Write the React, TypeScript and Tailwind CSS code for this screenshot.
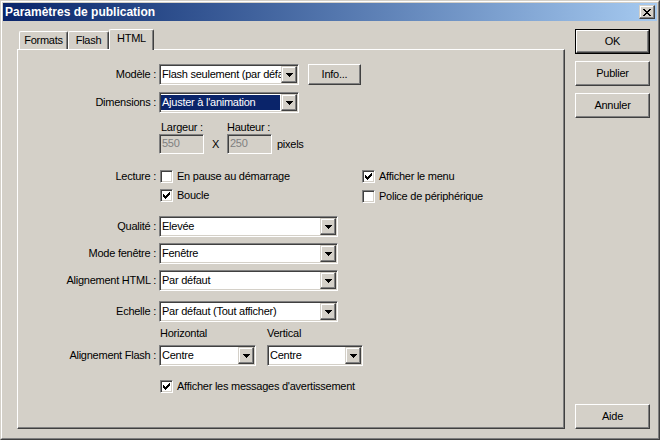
import { ReactNode } from 'react';

const sunken =
  'border border-t-[#808080] border-l-[#808080] border-r-white border-b-white shadow-[inset_1px_1px_0_#404040,inset_-1px_-1px_0_#d4d0c8]';
const raised =
  'border border-t-white border-l-white border-r-[#404040] border-b-[#404040] shadow-[inset_-1px_-1px_0_#808080,inset_1px_1px_0_#d4d0c8]';
const raisedSmall =
  'border border-t-[#d4d0c8] border-l-[#d4d0c8] border-r-[#404040] border-b-[#404040] shadow-[inset_-1px_-1px_0_#808080,inset_1px_1px_0_#ffffff]';

function Arrow() {
  return (
    <svg width="7" height="4" viewBox="0 0 7 4" shapeRendering="crispEdges">
      <path d="M0 0h7v1h-7z M1 1h5v1h-5z M2 2h3v1h-3z M3 3h1v1h-1z" fill="#000" />
    </svg>
  );
}

function Check() {
  return (
    <svg width="7" height="7" viewBox="0 0 7 7" shapeRendering="crispEdges">
      <path
        d="M6 0h1v1h-1z M5 1h2v1h-2z M0 2h1v1h-1z M4 2h3v1h-3z M0 3h2v1h-2z M3 3h3v1h-3z M0 4h5v1h-5z M1 5h3v1h-3z M2 6h1v1h-1z"
        fill="#000"
      />
    </svg>
  );
}

function Combo({ value, width, selected }: { value: string; width: string; selected?: boolean }) {
  return (
    <div className={`${sunken} ${width} h-[21px] bg-white p-px flex`}>
      <div className="flex-1 min-w-0 overflow-hidden whitespace-nowrap leading-[17px] py-px pr-px">
        <span className={selected ? 'block h-[15px] leading-[15px] bg-[#0a246a] text-white pl-px' : 'block leading-[15px] pl-px'}>
          {value}
        </span>
      </div>
      <div className={`${raisedSmall} w-[16px] h-[17px] bg-[#d4d0c8] flex items-center justify-center`}>
        <Arrow />
      </div>
    </div>
  );
}

function Checkbox({ checked, label }: { checked?: boolean; label: string }) {
  return (
    <div className="flex items-center gap-[4px] h-[13px]">
      <div className={`${sunken} w-[13px] h-[13px] bg-white flex items-center justify-center`}>
        {checked && <Check />}
      </div>
      <span className="whitespace-nowrap leading-[13px]">{label}</span>
    </div>
  );
}

function Button({ children, className, isDefault }: { children: ReactNode; className: string; isDefault?: boolean }) {
  if (isDefault) {
    return (
      <div className={`border border-black ${className}`}>
        <div className={`${raised} h-full flex items-center justify-center`}>{children}</div>
      </div>
    );
  }
  return <div className={`${raised} ${className} flex items-center justify-center`}>{children}</div>;
}

function Row({ label, className, children }: { label?: string; className: string; children: ReactNode }) {
  return (
    <div className={`flex items-center gap-[3px] ${className}`}>
      <div className="w-[138px] text-right whitespace-nowrap">{label}</div>
      {children}
    </div>
  );
}

function Tab({ label, width, active }: { label: string; width: string; active?: boolean }) {
  return (
    <div
      className={`${width} ${
        active ? 'h-[21px] -mb-px relative z-10 pb-[3px]' : 'h-[18px]'
      } bg-[#d4d0c8] border-t border-l border-r border-t-white border-l-white border-r-[#404040] rounded-t-[2px] shadow-[inset_-1px_0_0_#808080] flex items-center justify-center`}
    >
      {label}
    </div>
  );
}

export default function App() {
  return (
    <div className="w-[660px] h-[440px] bg-[#d4d0c8] border border-t-[#d4d0c8] border-l-[#d4d0c8] border-r-[#404040] border-b-[#404040] font-['Liberation_Sans',Arial,sans-serif] text-[11px] leading-[13px] tracking-[-0.25px] text-black">
      <div className="h-full border border-t-white border-l-white border-r-[#808080] border-b-[#808080] p-px flex flex-col">
        {/* title bar */}
        <div className="h-[18px] bg-gradient-to-r from-[#0a246a] to-[#a6caf0] flex items-center justify-between pl-[2px] pr-[2px]">
          <span className="text-white font-bold text-[12px] tracking-normal">Paramètres de publication</span>
          <div className={`${raisedSmall} w-[16px] h-[14px] bg-[#d4d0c8] flex items-center justify-center`}>
            <svg width="8" height="7" viewBox="0 0 8 7" shapeRendering="crispEdges">
              <path
                d="M0 0h2v1h-2z M6 0h2v1h-2z M1 1h2v1h-2z M5 1h2v1h-2z M2 2h4v1h-4z M3 3h2v1h-2z M2 4h4v1h-4z M1 5h2v1h-2z M5 5h2v1h-2z M0 6h2v1h-2z M6 6h2v1h-2z"
                fill="#000"
              />
            </svg>
          </div>
        </div>

        <div className="flex pl-[14px] pt-[8px] gap-[10px]">
          {/* tabs + panel */}
          <div className="w-[548px] flex flex-col">
            <div className="h-[20px] flex items-end pl-[2px]">
              <Tab label="Formats" width="w-[49px]" />
              <Tab label="Flash" width="w-[41px]" />
              <Tab label="HTML" width="w-[45px]" active />
            </div>
            <div className="h-[380px] border-t border-l border-r border-b border-t-white border-l-white border-r-[#404040] border-b-[#404040] shadow-[inset_-1px_-1px_0_#808080] flex flex-col">
              <Row label="Modèle :" className="mt-[14px]">
                <Combo width="w-[140px]" value="Flash seulement (par défaut)" />
                <Button className="ml-[6px] w-[53px] h-[21px]">Info...</Button>
              </Row>
              <Row label="Dimensions :" className="mt-[7px]">
                <Combo width="w-[140px]" value="Ajuster à l'animation" selected />
              </Row>
              <Row className="mt-[8px]">
                <span className="w-[65px] pl-[2px]">Largeur :</span>
                <span>Hauteur :</span>
              </Row>
              <Row className="">
                <div className={`${sunken} w-[45px] h-[20px] bg-[#d4d0c8] text-[#808080] pl-[2px] leading-[16px]`}>550</div>
                <span className="w-[17px] text-center">X</span>
                <div className={`${sunken} w-[45px] h-[20px] bg-[#d4d0c8] text-[#808080] pl-[2px] leading-[16px]`}>250</div>
                <span className="ml-[2px]">pixels</span>
              </Row>

              <div className="flex gap-[3px] mt-[16px]">
                <div className="w-[138px] text-right">Lecture :</div>
                <div className="w-[200px] flex flex-col gap-[6px] pl-px">
                  <Checkbox label="En pause au démarrage" />
                  <Checkbox label="Boucle" checked />
                </div>
                <div className="flex flex-col gap-[7px]">
                  <Checkbox label="Afficher le menu" checked />
                  <Checkbox label="Police de périphérique" />
                </div>
              </div>

              <Row label="Qualité :" className="mt-[13px]">
                <Combo width="w-[179px]" value="Elevée" />
              </Row>
              <Row label="Mode fenêtre :" className="mt-[6px]">
                <Combo width="w-[179px]" value="Fenêtre" />
              </Row>
              <Row label="Alignement HTML :" className="mt-[6px]">
                <Combo width="w-[179px]" value="Par défaut" />
              </Row>
              <Row label="Echelle :" className="mt-[10px]">
                <Combo width="w-[179px]" value="Par défaut (Tout afficher)" />
              </Row>
              <Row className="mt-[5px]">
                <span className="w-[105px] pl-px">Horizontal</span>
                <span>Vertical</span>
              </Row>
              <Row label="Alignement Flash :" className="mt-[5px]">
                <Combo width="w-[97px]" value="Centre" />
                <div className="w-[5px]" />
                <Combo width="w-[96px]" value="Centre" />
              </Row>
              <Row className="mt-[14px]">
                <div className="pl-px">
                  <Checkbox label="Afficher les messages d'avertissement" checked />
                </div>
              </Row>
            </div>
          </div>

          {/* buttons */}
          <div className="w-[75px] h-[400px] flex flex-col">
            <Button className="h-[25px]" isDefault>
              OK
            </Button>
            <Button className="h-[25px] mt-[7px]">Publier</Button>
            <Button className="h-[25px] mt-[7px]">Annuler</Button>
            <Button className="h-[25px] mt-auto">Aide</Button>
          </div>
        </div>
      </div>
    </div>
  );
}
